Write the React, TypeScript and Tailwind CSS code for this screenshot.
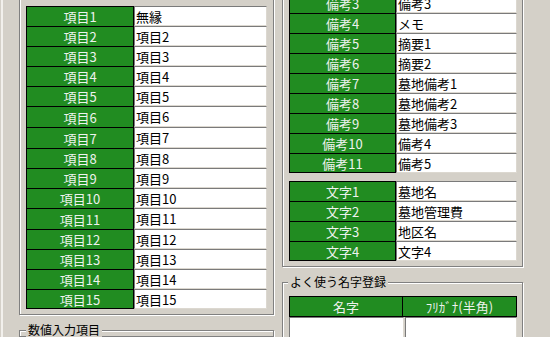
const font = { fontFamily: '"Noto Sans CJK JP", "Noto Sans", sans-serif' };

const leftRows = [
  ["項目1", "無縁"],
  ["項目2", "項目2"],
  ["項目3", "項目3"],
  ["項目4", "項目4"],
  ["項目5", "項目5"],
  ["項目6", "項目6"],
  ["項目7", "項目7"],
  ["項目8", "項目8"],
  ["項目9", "項目9"],
  ["項目10", "項目10"],
  ["項目11", "項目11"],
  ["項目12", "項目12"],
  ["項目13", "項目13"],
  ["項目14", "項目14"],
  ["項目15", "項目15"],
];
// measured row pitch on the left list
const leftHeights = [20, 20, 20, 20, 20, 21, 21, 20, 20, 20, 21, 20, 20, 20, 20];

const bikoRows = [
  ["備考1", "備考1"],
  ["備考2", "備考2"],
  ["備考3", "備考3"],
  ["備考4", "メモ"],
  ["備考5", "摘要1"],
  ["備考6", "摘要2"],
  ["備考7", "墓地備考1"],
  ["備考8", "墓地備考2"],
  ["備考9", "墓地備考3"],
  ["備考10", "備考4"],
  ["備考11", "備考5"],
];

const mojiRows = [
  ["文字1", "墓地名"],
  ["文字2", "墓地管理費"],
  ["文字3", "地区名"],
  ["文字4", "文字4"],
];

function FieldRow({ label, value, h, last, labelW }: { label: string; value: string; h: number; last: boolean; labelW: string }) {
  return (
    <div className="flex" style={{ height: h }}>
      <div
        className={`${labelW} flex shrink-0 items-center justify-center border-x border-t border-black bg-[#218c21] text-[13px] leading-none text-[#eef2ee] ${last ? "border-b" : ""}`}
      >
        {label}
      </div>
      <div className="flex flex-1 items-center border-t border-l border-b border-r border-t-[#7a7a7a] border-l-[#7a7a7a] border-b-[#dcd8d0] border-r-[#dcd8d0] bg-white pl-px text-[13px] leading-none text-black">
        {value}
      </div>
    </div>
  );
}

function GroupBox({ className, children }: { className: string; children: React.ReactNode }) {
  return (
    <div className={`relative border border-[#808080] shadow-[1px_1px_0_#ffffff,inset_1px_1px_0_#ffffff] ${className}`}>
      {children}
    </div>
  );
}

export default function App() {
  return (
    <div className="flex h-[337px] w-[550px] overflow-hidden bg-[#d4d0c8]" style={font}>
      <div className="ml-px w-[2px] shrink-0 bg-[#f2f0ec]" />

      {/* left column */}
      <div className="ml-[16px] flex w-[255px] shrink-0 flex-col">
        <GroupBox className="-mt-[10px] pt-[15px] pb-[5px] pl-[6px] pr-[6px]">
          {leftRows.map(([l, v], i) => (
            <FieldRow key={l} label={l} value={v} h={leftHeights[i]} last={i === leftRows.length - 1} labelW="w-[108px]" />
          ))}
        </GroupBox>

        <GroupBox className="mt-[15px] h-[40px]">
          <span className="absolute -top-[9px] left-[6px] bg-[#d4d0c8] px-[2px] text-[12px] leading-[16px] text-black">
            数値入力項目
          </span>
        </GroupBox>
      </div>

      {/* right column */}
      <div className="ml-[8px] flex w-[241px] shrink-0 flex-col">
        <GroupBox className="-mt-[54px] pt-[6px] pb-[5px] pl-[6px] pr-[5px]">
          {bikoRows.map(([l, v], i) => (
            <FieldRow key={l} label={l} value={v} h={20} last={i === bikoRows.length - 1} labelW="w-[107px]" />
          ))}
          <div className="h-[8px]" />
          {mojiRows.map(([l, v], i) => (
            <FieldRow key={l} label={l} value={v} h={20} last={i === mojiRows.length - 1} labelW="w-[107px]" />
          ))}
        </GroupBox>

        <GroupBox className="mt-[15px] h-[80px] pt-[13px] pl-[6px] pr-[5px]">
          <span className="absolute -top-[9px] left-[5px] bg-[#d4d0c8] px-[2px] text-[12px] leading-[16px] text-black">
            よく使う名字登録
          </span>
          <div className="flex h-[21px] border border-black bg-[#218c21] text-[13px] leading-none text-[#eef2ee]">
            <div className="flex w-[113px] items-center justify-center border-r border-black">名字</div>
            <div className="flex flex-1 items-center justify-center">ﾌﾘｶﾞﾅ(半角)</div>
          </div>
          <div className="flex h-[22px]">
            <div className="w-[115px] border-t border-l border-b border-r border-t-[#7a7a7a] border-l-[#7a7a7a] border-b-[#dcd8d0] border-r-[#dcd8d0] bg-white" />
            <div className="ml-px flex-1 border-t border-l border-b border-r border-t-[#7a7a7a] border-l-[#7a7a7a] border-b-[#dcd8d0] border-r-[#dcd8d0] bg-white" />
          </div>
        </GroupBox>
      </div>
    </div>
  );
}
